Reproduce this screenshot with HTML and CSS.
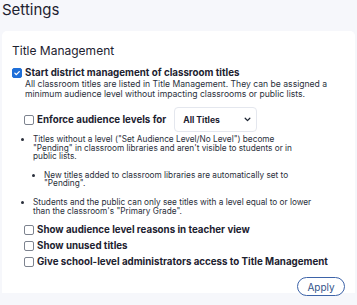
FILE: index.html
```html
<!DOCTYPE html>
<html>
<head>
<meta charset="utf-8">
<link rel="stylesheet" href="styles.css">
</head>
<body>
<h1 class="page-title">Settings</h1>
<main class="card">
  <h2 class="section-title">Title Management</h2>
  <div class="option main-option">
    <span class="box checked"><svg viewBox="0 0 10 10" width="10" height="10"><path d="M2.3 5.2 L4.2 7.1 L7.8 3.2" fill="none" stroke="#fff" stroke-width="1.6" stroke-linecap="round" stroke-linejoin="round"/></svg></span>
    <div class="option-body">
      <div class="label">Start district management of classroom titles</div>
      <p class="desc">All classroom titles are listed in Title Management. They can be assigned a minimum audience level without impacting classrooms or public lists.</p>
    </div>
  </div>
  <div class="sub">
    <div class="option enforce">
      <span class="box"></span>
      <span class="label">Enforce audience levels for</span>
      <div class="select"><span>All Titles</span><svg viewBox="0 0 8 6" width="7" height="5"><path d="M1.2 1.5 L4 4.3 L6.8 1.5" fill="none" stroke="#1d2533" stroke-width="1.5" stroke-linecap="round" stroke-linejoin="round"/></svg></div>
    </div>
    <ul class="rules">
      <li>Titles without a level ("Set Audience Level/No Level") become<br>"Pending" in classroom libraries and aren't visible to students or in<br>public lists.
        <ul>
          <li>New titles added to classroom libraries are automatically set to<br>"Pending".</li>
        </ul>
      </li>
      <li>Students and the public can only see titles with a level equal to or lower<br>than the classroom's "Primary Grade".</li>
    </ul>
    <div class="option row"><span class="box"></span><span class="label">Show audience level reasons in teacher view</span></div>
    <div class="option row"><span class="box"></span><span class="label">Show unused titles</span></div>
    <div class="option row"><span class="box"></span><span class="label">Give school-level administrators access to Title Management</span></div>
  </div>
  <div class="actions"><button class="apply">Apply</button></div>
</main>
</body>
</html>
```
FILE: styles.css
```css
html, body {
  margin: 0;
  padding: 0;
}
body {
  background: #f6f7fb;
  font-family: Inter, "Open Sans", sans-serif;
  color: #1d2230;
  height: 305px;
  overflow: hidden;
}
.page-title {
  margin: 0;
  padding: 0 2px;
  font-size: 15px;
  font-weight: 400;
  line-height: 20px;
  color: #1d2230;
}
.card {
  display: block;
  margin: 11px 2px 0 2px;
  background: #fff;
  border-radius: 5px 5px 0 0;
  padding: 12px 10px 0 10px;
  height: 262px;
  box-sizing: border-box;
}
.section-title {
  margin: 0;
  font-size: 12px;
  font-weight: 400;
  line-height: 16px;
}
.option {
  display: flex;
  align-items: flex-start;
  gap: 3px;
}
.main-option {
  margin-top: 9px;
}
.box {
  flex: none;
  width: 10px;
  height: 10px;
  box-sizing: border-box;
  border: 1px solid #7d838f;
  border-radius: 2px;
  background: #fff;
  display: flex;
  align-items: center;
  justify-content: center;
}
.box.checked {
  background: #1f6fd8;
  border-color: #1f6fd8;
}
.box svg { display: block; }
.label {
  font-size: 9.75px;
  font-weight: 700;
  line-height: 10px;
  white-space: nowrap;
}
.desc {
  margin: 1px 0 0 0;
  font-size: 8.6px;
  line-height: 10px;
  color: #2a2f3b;
}
.sub {
  padding-left: 12px;
}
.enforce {
  align-items: center;
  margin-top: 8px;
}
.enforce .label {
  margin-right: 5px;
}
.select {
  width: 83px;
  height: 25px;
  box-sizing: border-box;
  border: 1px solid #e4e7ee;
  border-radius: 4px;
  display: flex;
  align-items: center;
  justify-content: space-between;
  padding: 0 5px 0 8px;
  font-size: 8.6px;
  font-weight: 700;
}
.rules {
  margin: 3px 0 0 0;
  padding-left: 9px;
  font-size: 8.25px;
  line-height: 8.6px;
  color: #2a2f3b;
  list-style: disc;
}
.rules li {
  margin-bottom: 10px;
}
.rules ul {
  margin: 10px 0 0 0;
  padding-left: 11px;
  list-style: disc;
}
.rules ul li {
  margin-bottom: 0;
}
.row {
  align-items: center;
  margin-top: 6px;
}
.actions {
  display: flex;
  justify-content: flex-end;
  margin-top: 10px;
  padding-right: 0;
}
.apply {
  width: 48px;
  height: 19px;
  border: 1px solid #3d63a8;
  border-radius: 10px;
  background: #fff;
  font-family: inherit;
  font-size: 10px;
  color: #34548a;
  padding: 0;
}
```
